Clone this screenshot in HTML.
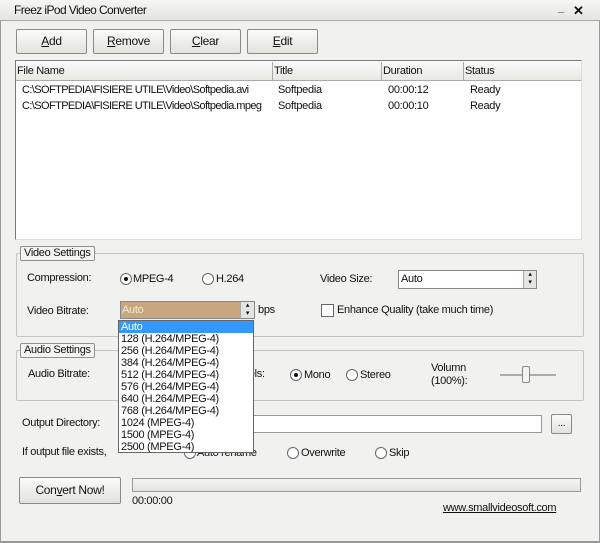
<!DOCTYPE html>
<html><head><style>
*{margin:0;padding:0;box-sizing:border-box}
body{width:600px;height:543px;background:#f1f1ef;font-family:"Liberation Sans",sans-serif;font-size:11px;letter-spacing:-0.3px;color:#111;position:relative;overflow:hidden}
.a{position:absolute;white-space:nowrap}
.btn{position:absolute;border:1px solid #8a8a8a;border-radius:2px;background:linear-gradient(#fbfbfa,#e2e2de);text-align:center;font-size:12px}
.rad{position:absolute;width:12px;height:12px;border:1px solid #666;border-radius:50%;background:#fff}
.rad.on::after{content:"";position:absolute;left:3px;top:3px;width:4px;height:4px;border-radius:50%;background:#111}
.grp{position:absolute;border:1px solid #c4c4c0;border-radius:2px}
.lbl{position:absolute;border:1px solid #909090;border-radius:2px;background:#f4f4f2;padding:0 3px;font-size:11px;line-height:13px}
</style></head><body>
<div class="a" style="left:0;top:0;width:600px;height:21px;background:linear-gradient(#f6f6f4,#e4e4e0);border-bottom:1px solid #a8a8a8"></div>
<div class="a" style="left:14px;top:3px;font-size:12px;letter-spacing:-0.6px">Freez iPod Video Converter</div>
<div class="a" style="left:558px;top:2px;font-size:11px;font-weight:bold">_</div>
<div class="a" style="left:573px;top:3px;font-size:13px;font-weight:bold">✕</div>
<div class="a" style="left:0;top:21px;width:1px;height:522px;background:#999"></div>
<div class="a" style="left:599px;top:21px;width:1px;height:522px;background:#999"></div>
<div class="a" style="left:0;top:541px;width:600px;height:2px;background:#999"></div>

<div class="btn" style="left:16px;top:29px;width:71px;height:25px;line-height:23px"><u>A</u>dd</div>
<div class="btn" style="left:93px;top:29px;width:71px;height:25px;line-height:23px"><u>R</u>emove</div>
<div class="btn" style="left:170px;top:29px;width:71px;height:25px;line-height:23px"><u>C</u>lear</div>
<div class="btn" style="left:247px;top:29px;width:71px;height:25px;line-height:23px"><u>E</u>dit</div>

<div class="a" style="left:15px;top:60px;width:567px;height:180px;background:#fff;border:1px solid #7a7a7a;border-right-color:#ddd;border-bottom-color:#ddd"></div>
<div class="a" style="left:16px;top:61px;width:565px;height:20px;background:linear-gradient(#fafafa,#e8e8e4);border-bottom:1px solid #aaa"></div>
<div class="a" style="left:272px;top:62px;width:1px;height:18px;background:#aaa"></div>
<div class="a" style="left:381px;top:62px;width:1px;height:18px;background:#aaa"></div>
<div class="a" style="left:463px;top:62px;width:1px;height:18px;background:#aaa"></div>
<div class="a" style="left:17px;top:65px">File Name</div>
<div class="a" style="left:274px;top:65px">Title</div>
<div class="a" style="left:383px;top:65px">Duration</div>
<div class="a" style="left:465px;top:65px">Status</div>
<div class="a" style="left:22px;top:84px;letter-spacing:-0.6px">C:\SOFTPEDIA\FISIERE UTILE\Video\Softpedia.avi</div>
<div class="a" style="left:278px;top:84px">Softpedia</div>
<div class="a" style="left:388px;top:84px">00:00:12</div>
<div class="a" style="left:470px;top:84px">Ready</div>
<div class="a" style="left:22px;top:100px;letter-spacing:-0.6px">C:\SOFTPEDIA\FISIERE UTILE\Video\Softpedia.mpeg</div>
<div class="a" style="left:278px;top:100px">Softpedia</div>
<div class="a" style="left:388px;top:100px">00:00:10</div>
<div class="a" style="left:470px;top:100px">Ready</div>

<div class="grp" style="left:16px;top:253px;width:568px;height:84px"></div>
<div class="lbl" style="left:20px;top:246px">Video Settings</div>
<div class="a" style="left:27px;top:272px">Compression:</div>
<div class="rad on" style="left:120px;top:273px"></div><div class="a" style="left:133px;top:273px">MPEG-4</div>
<div class="rad" style="left:202px;top:273px"></div><div class="a" style="left:216px;top:273px">H.264</div>
<div class="a" style="left:320px;top:273px">Video Size:</div>
<div class="a" style="left:398px;top:270px;width:139px;height:19px;background:#fff;border:1px solid #888"></div>
<div class="a" style="left:401px;top:273px">Auto</div>
<div class="a" style="left:523px;top:271px;width:13px;height:17px;background:#e4e4e0;border-left:1px solid #aaa;font-size:7px;text-align:center;line-height:8px">▴<br>▾</div>
<div class="a" style="left:27px;top:305px">Video Bitrate:</div>
<div class="a" style="left:120px;top:301px;width:135px;height:18px;background:#c8a67e;border:1px solid #888"></div>
<div class="a" style="left:122px;top:304px;color:#f4ead8">Auto</div>
<div class="a" style="left:240px;top:302px;width:14px;height:16px;background:#e4e4e0;border-left:1px solid #aaa;font-size:7px;text-align:center;line-height:8px">▴<br>▾</div>
<div class="a" style="left:258px;top:304px">bps</div>
<div class="a" style="left:321px;top:304px;width:13px;height:13px;border:1px solid #666;background:#fff"></div>
<div class="a" style="left:337px;top:304px">Enhance Quality (take much time)</div>

<div class="grp" style="left:16px;top:350px;width:568px;height:51px"></div>
<div class="lbl" style="left:20px;top:343px">Audio Settings</div>
<div class="a" style="left:28px;top:368px">Audio Bitrate:</div>
<div class="a" style="left:243px;top:368px">nels:</div>
<div class="rad on" style="left:290px;top:369px"></div><div class="a" style="left:304px;top:369px">Mono</div>
<div class="rad" style="left:346px;top:369px"></div><div class="a" style="left:360px;top:369px">Stereo</div>
<div class="a" style="left:431px;top:362px;line-height:13px">Volumn<br>(100%):</div>
<div class="a" style="left:500px;top:374px;width:56px;height:2px;background:#aaa"></div>
<div class="a" style="left:522px;top:366px;width:8px;height:17px;border:1px solid #888;border-radius:2px;background:#f4f4f2"></div>

<div class="a" style="left:22px;top:417px">Output Directory:</div>
<div class="a" style="left:240px;top:415px;width:302px;height:18px;background:#fff;border:1px solid #999"></div>
<div class="btn" style="left:551px;top:414px;width:21px;height:20px;line-height:17px;font-size:10px">...</div>
<div class="a" style="left:22px;top:446px">If output file exists,</div>
<div class="rad" style="left:184px;top:447px"></div><div class="a" style="left:197px;top:447px">Auto rename</div>
<div class="rad" style="left:287px;top:447px"></div><div class="a" style="left:301px;top:447px">Overwrite</div>
<div class="rad" style="left:375px;top:447px"></div><div class="a" style="left:389px;top:447px">Skip</div>

<div class="btn" style="left:19px;top:477px;width:102px;height:27px;line-height:25px">Con<u>v</u>ert Now!</div>
<div class="a" style="left:132px;top:478px;width:449px;height:14px;border:1px solid #999;background:linear-gradient(#f4f4f2,#e4e4e0)"></div>
<div class="a" style="left:132px;top:495px">00:00:00</div>
<div class="a" style="left:443px;top:502px;text-decoration:underline">www.smallvideosoft.com</div>

<div class="a" style="left:118px;top:320px;width:136px;height:133px;background:#fff;border:1px solid #666;font-size:11px;line-height:12px;padding-top:0">
<div style="background:#3399ff;color:#fff;padding-left:2px">Auto</div>
<div style="padding-left:2px">128 (H.264/MPEG-4)<br>256 (H.264/MPEG-4)<br>384 (H.264/MPEG-4)<br>512 (H.264/MPEG-4)<br>576 (H.264/MPEG-4)<br>640 (H.264/MPEG-4)<br>768 (H.264/MPEG-4)<br>1024 (MPEG-4)<br>1500 (MPEG-4)<br>2500 (MPEG-4)</div>
</div>
</body></html>
